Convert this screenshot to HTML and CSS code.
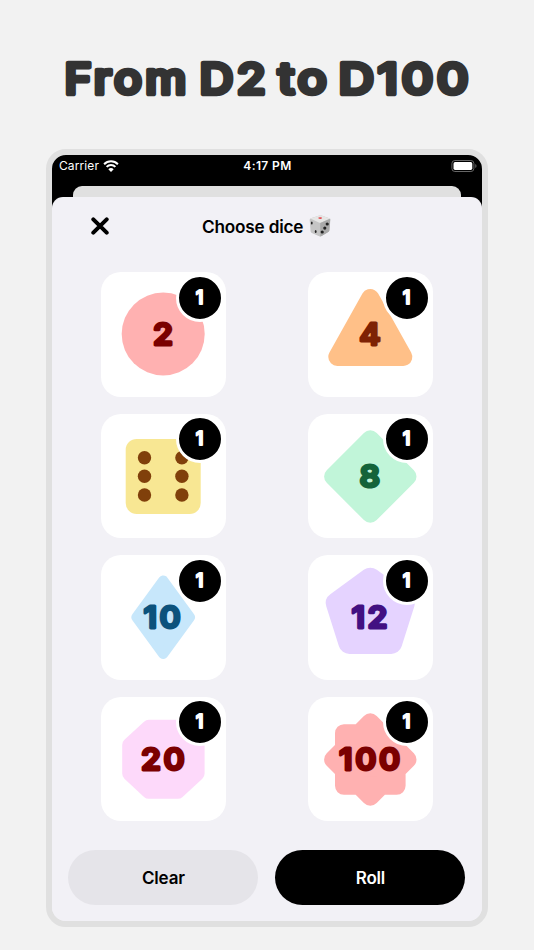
FILE: index.html
```html
<!DOCTYPE html>
<html lang="en">
<head>
<meta charset="utf-8">
<title>Choose dice</title>
<link rel="stylesheet" href="styles.css">
</head>
<body>
<h1 class="headline">
  <svg class="headline-art" viewBox="0 0 534 149"><text x="64.5" y="93.6" textLength="125" lengthAdjust="spacingAndGlyphs">From</text> <text x="199.5" y="93.6" textLength="69.5" lengthAdjust="spacingAndGlyphs">D2</text> <text x="278" y="93.6" textLength="52" lengthAdjust="spacingAndGlyphs">to</text> <text x="338.5" y="93.6" textLength="133.5" lengthAdjust="spacingAndGlyphs">D100</text></svg>
</h1>
<main class="phone">
  <div class="status">
    <span class="carrier">Carrier
      <svg class="wifi" viewBox="0 0 16 12"><path d="M1.1 4.2a9.8 9.8 0 0 1 13.8 0M3.6 6.9a6.2 6.2 0 0 1 8.8 0" fill="none" stroke="#fff" stroke-width="2"/><path d="M8 12 5.3 9.3a3.8 3.8 0 0 1 5.4 0z" fill="#fff"/></svg>
    </span>
    <span class="clock">4:17 PM</span>
    <svg class="battery" viewBox="0 0 26 12"><rect x=".9" y=".5" width="22" height="11" rx="3" fill="none" stroke="#666"/><rect x="2.5" y="2.1" width="18.8" height="7.8" rx="1.6" fill="#fff"/><path d="M24.3 4v4q1.2-.6 1.2-2t-1.2-2z" fill="#666"/></svg>
  </div>
  <div class="back-sheet"></div>
  <section class="sheet">
    <header class="bar">
      <svg class="close" viewBox="0 0 18 18"><path d="m2.3 2.3 13.4 13.4m0-13.4L2.3 15.7"/></svg>
      <h2 class="title">Choose dice</h2>
      <svg class="emoji" viewBox="0 0 22 22"><path d="M2 3.2 10.5.6q1-.3 2 0l7.7 2.6q1.3.5 1.2 1.8l-1 10.2q-.1 1.2-1.1 1.9l-6.7 4q-1.2.7-2.4.1L2.8 18q-1-.5-1.2-1.7L.7 5q-.1-1.3 1.3-1.8z" fill="#c5c5c5"/><path d="M1.4 3.6 10.5.6q1-.3 2 0l8.4 3-9 4.1q-.8.3-1.6 0z" fill="#e6e6e5"/><path d="m11.2 8 10-4.2-.8 11.4q-.1 1.2-1.1 1.9l-6.7 4q-.8.5-1.4.4z" fill="#a9a9a9"/><ellipse cx="11.2" cy="3.1" rx="2" ry=".8" fill="#e34249"/><g fill="#222"><ellipse cx="2.8" cy="8.1" rx=".9" ry="1.5"/><ellipse cx="6.7" cy="16.4" rx=".9" ry="1.5"/><circle cx="18.2" cy="9" r="1.6"/><circle cx="15.8" cy="13.1" r="1.6"/><circle cx="13.2" cy="17" r="1.6"/></g></svg>
    </header>
    <div class="dice">
      <article class="card"><svg class="die red" viewBox="0 0 124.5 124.5"><circle class="plain" cx="62.2" cy="62" r="41.5"/><text x="63.1" y="72.7">2</text></svg><svg class="badge" viewBox="0 0 48 48"><circle cx="24" cy="24" r="22.5"/><text x="23.5" y="29.8">1</text></svg></article>
      <article class="card"><svg class="die orange" viewBox="0 0 124.5 124.5"><path stroke-width="18" d="m62.3 26 33 59h-66z"/><text x="63.1" y="72.7">4</text></svg><svg class="badge" viewBox="0 0 48 48"><circle cx="24" cy="24" r="22.5"/><text x="23.5" y="29.8">1</text></svg></article>
      <article class="card"><svg class="die yellow" viewBox="0 0 124.5 124.5"><rect class="plain" x="24.7" y="24.9" width="75" height="75" rx="11"/><g class="pips"><circle cx="43.5" cy="43.7" r="6.7"/><circle cx="80.9" cy="43.7" r="6.7"/><circle cx="43.5" cy="62.3" r="6.7"/><circle cx="80.9" cy="62.3" r="6.7"/><circle cx="43.5" cy="81" r="6.7"/><circle cx="80.9" cy="81" r="6.7"/></g></svg><svg class="badge" viewBox="0 0 48 48"><circle cx="24" cy="24" r="22.5"/><text x="23.5" y="29.8">1</text></svg></article>
      <article class="card"><svg class="die green" viewBox="0 0 124.5 124.5"><path stroke-width="18" d="m62.3 25.3 37.2 37.2-37.2 37.2-37.2-37.2z"/><text x="63.1" y="72.7">8</text></svg><svg class="badge" viewBox="0 0 48 48"><circle cx="24" cy="24" r="22.5"/><text x="23.5" y="29.8">1</text></svg></article>
      <article class="card"><svg class="die blue" viewBox="0 0 124.5 124.5"><path stroke-width="10" d="m62.2 25.4 26.8 36.8-26.8 36.8-26.8-36.8z"/><text x="62.4" y="72.7">10</text></svg><svg class="badge" viewBox="0 0 48 48"><circle cx="24" cy="24" r="22.5"/><text x="23.5" y="29.8">1</text></svg></article>
      <article class="card"><svg class="die purple" viewBox="0 0 124.5 124.5"><path stroke-width="22" d="M62.3 23.7 95.8 48.2 83.2 88H41.4L28.8 48.2z"/><text x="62.8" y="72.7">12</text></svg><svg class="badge" viewBox="0 0 48 48"><circle cx="24" cy="24" r="22.5"/><text x="23.5" y="29.8">1</text></svg></article>
      <article class="card"><svg class="die pink" viewBox="0 0 124.5 124.5"><path stroke-width="14" d="M47.8 29.8h29L96.6 48v28.6L76.8 94.8h-29L28.2 76.6V48z"/><text x="63.1" y="72.7">20</text></svg><svg class="badge" viewBox="0 0 48 48"><circle cx="24" cy="24" r="22.5"/><text x="23.5" y="29.8">1</text></svg></article>
      <article class="card"><svg class="die red" viewBox="0 0 124.5 124.5"><path stroke-width="18" d="m62.3 25.3 37.2 37.2-37.2 37.2-37.2-37.2zM36 36.2h52.6v52.6H36z"/><text x="62.8" y="72.7">100</text></svg><svg class="badge" viewBox="0 0 48 48"><circle cx="24" cy="24" r="22.5"/><text x="23.5" y="29.8">1</text></svg></article>
    </div>
    <footer class="actions">
      <button class="button">Clear</button>
      <button class="button primary">Roll</button>
    </footer>
  </section>
</main>
</body>
</html>
```
FILE: styles.css
```css
* { box-sizing: border-box; margin: 0; }
body {
  width: 534px;
  height: 950px;
  overflow: hidden;
  background: #f2f2f2;
  font-family: Inter, "Liberation Sans", sans-serif;
}
svg { display: block; }
.headline { height: 149px; }
.headline-art { width: 534px; height: 149px; }
.headline text {
  font-size: 43px;
  font-weight: 500;
  letter-spacing: 3px;
  fill: #333;
  stroke: #333;
  stroke-width: 4.6px;
  stroke-linejoin: round;
}
.phone {
  width: 442px;
  height: 778px;
  margin-left: 46px;
  border: 6px solid #e0e0e0;
  border-radius: 20px;
  background: linear-gradient(#000 60px, #f2f1f6 60px);
  overflow: hidden;
  display: flex;
  flex-direction: column;
}
.status {
  height: 31px;
  flex: none;
  display: grid;
  grid-template-columns: 1fr auto 1fr;
  padding: 0 6px 10px 7px;
  align-items: center;
  color: #fff;
  font-size: 12px;
}
.carrier { display: flex; align-items: center; gap: 5px; letter-spacing: .1px; }
.wifi { width: 16px; height: 12px; flex: none; margin-left: -1px; }
.clock { font-weight: 600; font-size: 12px; letter-spacing: .4px; }
.battery { width: 26px; height: 12px; justify-self: end; margin-right: -1px; }
.back-sheet {
  height: 11px;
  flex: none;
  margin: 0 21px;
  border-radius: 9px 9px 0 0;
  background: #e0e0e0;
}
.sheet {
  flex: 1;
  display: flex;
  flex-direction: column;
  padding: 0 16.5px;
  border-radius: 11px 11px 0 0;
  background: #f2f1f6;
}
.bar { height: 75px; display: flex; align-items: center; padding: 0 0 17px 22.5px; }
.close { width: 18px; height: 18px; margin-right: 93px; }
.close path { stroke: #000; stroke-width: 4; stroke-linecap: round; }
.title { font-size: 17.2px; font-weight: 600; letter-spacing: -.2px; width: 106.5px; white-space: nowrap; }
.emoji { width: 22px; height: 22px; }
.dice {
  display: grid;
  grid-template-columns: 190px 190px;
  column-gap: 17px;
  row-gap: 17px;
  margin-left: .1px;
  justify-items: center;
}
.card { position: relative; width: 124.5px; height: 124.5px; border-radius: 20px; background: #fff; }
.die { width: 124.5px; height: 124.5px; }
.die path { stroke-linejoin: round; fill: var(--face); stroke: var(--face); }
.plain { fill: var(--face); }
.pips { fill: var(--ink); }
.die text, .badge text { text-anchor: middle; font-weight: 600; stroke-linejoin: round; }
.die text {
  font-size: 30px;
  letter-spacing: 2.4px;
  fill: var(--ink);
  stroke: var(--ink);
  stroke-width: 2.8px;
  transform: scaleX(1.07);
  transform-origin: 62.2px 0;
}
.red { --face: #ffb1b1; --ink: #7b0000; }
.orange { --face: #ffc088; --ink: #7e2204; }
.yellow { --face: #f8e793; --ink: #80400b; }
.green { --face: #c1f5d9; --ink: #14633a; }
.blue { --face: #c7e7fb; --ink: #0c527c; }
.purple { --face: #e5d3ff; --ink: #421082; }
.pink { --face: #fdd9fa; --ink: #7b0000; }
.badge { position: absolute; top: 1.6px; right: 2px; width: 48px; height: 48px; }
.badge circle { stroke: #fff; stroke-width: 3; }
.badge text { font-size: 18px; fill: #fff; stroke: #fff; stroke-width: 1.8px; }
.actions { display: grid; grid-template-columns: 190px 190px; gap: 17px; margin: 29px 0 0 -.1px; }
.button {
  height: 54.5px;
  padding: 1px 0 0;
  border: 0;
  border-radius: 28px;
  background: #e5e4e9;
  color: #000;
  font: 600 17px Inter, "Liberation Sans", sans-serif;
  letter-spacing: -.2px;
}
.primary { background: #000; color: #fff; }
```
